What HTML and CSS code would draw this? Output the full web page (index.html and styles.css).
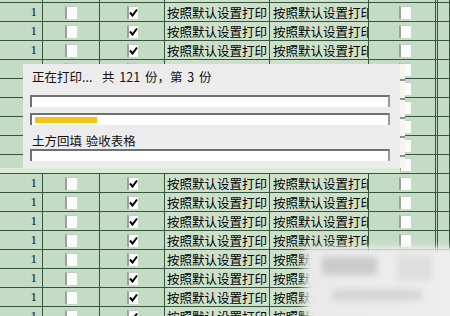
FILE: index.html
```html
<!DOCTYPE html>
<html>
<head>
<meta charset="utf-8">
<link rel="stylesheet" href="styles.css">
</head>
<body>
<div class="sheet" id="sheet"></div>
<div class="dialog">
  <div class="msg">正在打印...  共 121 份，第 3 份</div>
  <div class="bar"></div>
  <div class="bar"><div class="fill" style="width:62px"></div></div>
  <div class="msg msg2">土方回填 验收表格</div>
  <div class="bar"></div>
  <div class="edge"></div>
</div>
<div class="shade"></div>
<div class="watermark"><div class="wm-a"></div><div class="wm-b"></div><div class="wm-c"></div></div>
<script>
  var s = document.getElementById('sheet');
  var check = '<svg class="tick" width="9" height="9" viewBox="0 0 9 9"><path d="M1 4.5 L3.5 7.5 L8 1.5" fill="none" stroke="#000" stroke-width="2"/></svg>';
  var html = '';
  for (var i = 0; i < 18; i++) {
    html += '<div class="row">' +
      '<div class="c c1">1</div>' +
      '<div class="c c2"><span class="box"></span></div>' +
      '<div class="c c3"><span class="box checked">' + check + '</span></div>' +
      '<div class="c c4 txt">按照默认设置打印</div>' +
      '<div class="c c5 txt">按照默认设置打印</div>' +
      '<div class="c c6"><span class="box"></span></div>' +
      '<div class="c c7"></div>' +
      '</div>';
  }
  s.innerHTML = html;
</script>
</body>
</html>
```
FILE: styles.css
```css
html, body {
  margin: 0;
  padding: 0;
  width: 450px;
  height: 316px;
  overflow: hidden;
  background: #c4dcc4;
  font-family: "Noto Sans CJK SC", sans-serif;
}
.sheet {
  margin-top: -16px;
  display: flex;
  flex-direction: column;
}
.row {
  display: grid;
  grid-template-columns: 43px 57px 65px 105px 99px 69px 1fr;
  height: 19px;
  box-sizing: border-box;
  border-bottom: 1px solid #36553d;
}
.c {
  border-right: 1px solid #36553d;
  display: flex;
  align-items: center;
  overflow: hidden;
  white-space: nowrap;
  box-sizing: border-box;
}
.c1 {
  justify-content: flex-end;
  padding-right: 5px;
  font-family: "Liberation Serif", serif;
  font-size: 13px;
  color: #111;
}
.c2, .c3, .c6 {
  justify-content: center;
}
.c6 {
  padding-left: 6px;
  border-right: 3px double #36553d;
}
.txt {
  font-size: 12.5px;
  color: #000;
  padding-left: 2px;
  background: #cde0cb;
}
.c5 { padding-left: 3px; }
.box {
  width: 12px;
  height: 13px;
  background: #fbfbfb;
  border-left: 2px solid #9aa29a;
  border-top: 1px solid #c8c8c8;
  box-sizing: border-box;
  display: flex;
  align-items: center;
  justify-content: center;
}
.box.checked {
  width: 11px;
}
.tick {
  display: block;
}
.dialog {
  position: absolute;
  left: 23px;
  top: 64px;
  width: 377px;
  height: 104px;
  background: #ececec;
  box-sizing: border-box;
  padding: 4px 10px 0 7px;
  display: flex;
  flex-direction: column;
}
.msg {
  font-size: 12.5px;
  height: 18px;
  line-height: 18px;
  padding-left: 2px;
  color: #111;
  margin-bottom: 9px;
  white-space: pre;
  word-spacing: 2px;
}
.msg2 {
  margin: 1px 0 0;
  height: 17px;
  line-height: 17px;
  word-spacing: 1px;
}
.bar {
  height: 12px;
  background: #fff;
  border-top: 2px solid #707070;
  border-left: 2px solid #707070;
  border-right: 2px solid #9a9a9a;
  box-sizing: border-box;
  margin-bottom: 6px;
  padding: 2px 0 0 3px;
}
.bar:last-of-type { margin-bottom: 0; }
.fill {
  height: 6px;
  background: #f5c21a;
}
.edge {
  position: absolute;
  right: -5px;
  top: 0;
  width: 5px;
  height: 104px;
  background: repeating-linear-gradient(to bottom, #f4f6ee 0, #f4f6ee 15px, #8a908a 15px, #8a908a 17px, #f4f6ee 17px, #f4f6ee 19px);
}
.shade {
  position: absolute;
  left: 0;
  top: 168px;
  width: 400px;
  height: 5px;
  background: #dcebd8;
}
.watermark {
  position: absolute;
  left: 302px;
  top: 247px;
  width: 160px;
  height: 80px;
  background: linear-gradient(to right, rgba(232,232,232,0.3) 0, rgba(234,234,234,1) 8px, rgba(238,238,238,1) 100%);
  filter: blur(3px);
  overflow: hidden;
}
.wm-a, .wm-b, .wm-c {
  position: absolute;
  background: rgba(190,190,190,0.7);
}
.wm-a { left: 20px; top: 10px; width: 55px; height: 18px; }
.wm-b { left: 30px; top: 42px; width: 90px; height: 12px; background: rgba(205,205,205,0.7); }
.wm-c { left: 95px; top: 8px; width: 35px; height: 26px; background: rgba(215,215,215,0.7); }
```
